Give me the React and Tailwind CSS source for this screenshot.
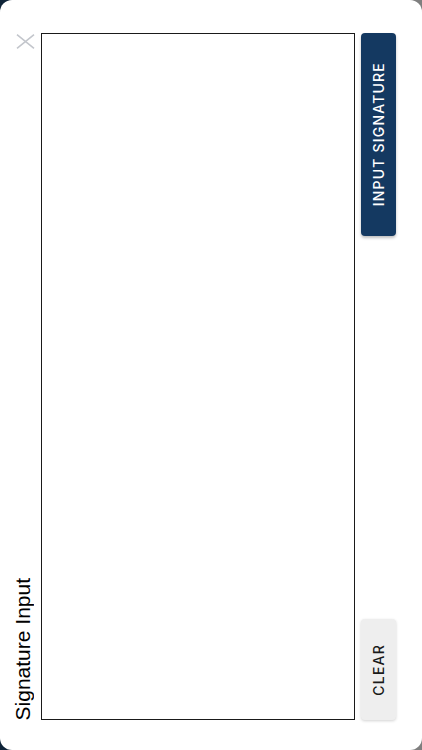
import React from "react";

export default function App() {
  return (
    <div className="w-[422px] h-[750px] bg-[linear-gradient(to_right,#0f2438_50%,#7f7f7f_50%)]">
      <div className="w-full h-full bg-white rounded-[12px] flex flex-row pt-[33px] pb-[30px] font-['Liberation_Sans',Arial,sans-serif]">
        <div className="w-[41px] flex flex-col items-start justify-between">
          <button className="ml-[16px] mt-[1px] w-[19px] h-[15px] flex items-center justify-center">
            <svg width="19" height="15" viewBox="0 0 19 15" fill="none">
              <path d="M1 0.7 L18 14.3 M18 0.7 L1 14.3" stroke="#c3c6cc" strokeWidth="1.6" />
            </svg>
          </button>
          <div className="ml-[11px] [writing-mode:vertical-rl] rotate-180 text-[21px] leading-[24px] text-black">
            Signature Input
          </div>
        </div>
        <div className="w-[314px] border border-[#1a1a1a] bg-white"></div>
        <div className="ml-[6px] w-[35px] flex flex-col justify-between">
          <button className="h-[203px] w-[35px] bg-[#143961] rounded-[4px] shadow-[0_2px_3px_rgba(0,0,0,0.25)] flex items-center justify-center">
            <span className="[writing-mode:vertical-rl] rotate-180 text-white text-[14px] font-medium tracking-[1.2px] font-['Inter',sans-serif]">
              INPUT SIGNATURE
            </span>
          </button>
          <button className="h-[101px] w-[35px] bg-[#eeeeee] rounded-[4px] shadow-[0_1px_3px_rgba(0,0,0,0.18)] flex items-center justify-center">
            <span className="[writing-mode:vertical-rl] rotate-180 text-[#1a1a1a] text-[14px] font-medium tracking-[1.2px] font-['Inter',sans-serif]">
              CLEAR
            </span>
          </button>
        </div>
      </div>
    </div>
  );
}
